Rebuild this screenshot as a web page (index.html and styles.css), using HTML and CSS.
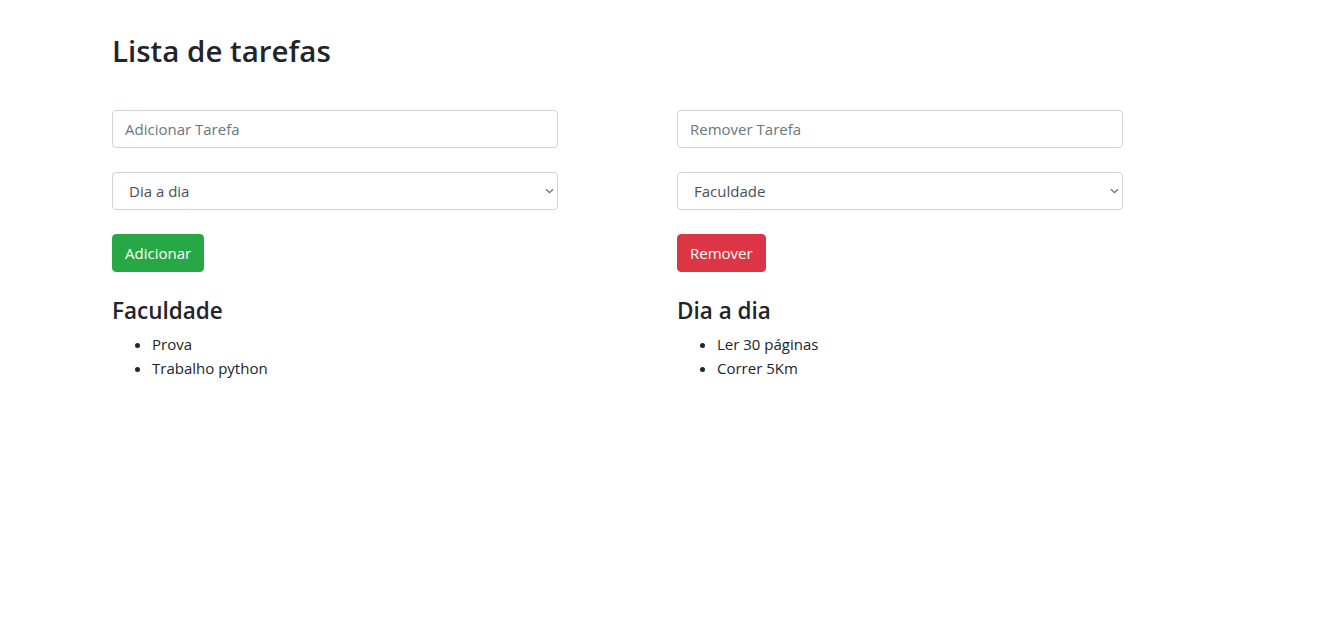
FILE: index.html
```html
<!DOCTYPE html>
<html lang="pt">
<head>
<meta charset="utf-8">
<title>Lista de tarefas</title>
<link rel="stylesheet" href="styles.css">
</head>
<body>
<main class="container">
  <h1 class="title">Lista de tarefas</h1>
  <div class="columns">
    <section class="col">
      <input class="field" type="text" placeholder="Adicionar Tarefa">
      <div class="select-wrap">
        <select class="field select">
          <option>Dia a dia</option>
          <option>Faculdade</option>
        </select>
        <svg class="chevron" width="9" height="6" viewBox="0 0 9 6"><path d="M1 1.2 L4.5 4.6 L8 1.2" fill="none" stroke="#6d6d6d" stroke-width="1.3"/></svg>
      </div>
      <button class="btn btn-success">Adicionar</button>
      <div class="list-block">
        <h4 class="list-title">Faculdade</h4>
        <ul class="tasks">
          <li>Prova</li>
          <li>Trabalho python</li>
        </ul>
      </div>
    </section>
    <section class="col">
      <input class="field" type="text" placeholder="Remover Tarefa">
      <div class="select-wrap">
        <select class="field select">
          <option>Faculdade</option>
          <option>Dia a dia</option>
        </select>
        <svg class="chevron" width="9" height="6" viewBox="0 0 9 6"><path d="M1 1.2 L4.5 4.6 L8 1.2" fill="none" stroke="#6d6d6d" stroke-width="1.3"/></svg>
      </div>
      <button class="btn btn-danger">Remover</button>
      <div class="list-block">
        <h4 class="list-title">Dia a dia</h4>
        <ul class="tasks">
          <li>Ler 30 páginas</li>
          <li>Correr 5Km</li>
        </ul>
      </div>
    </section>
  </div>
</main>
</body>
</html>
```

FILE: styles.css
```css
* { box-sizing: border-box; }
html, body { margin: 0; background: #fff; }
body {
  font-family: "Open Sans", "Noto Sans", sans-serif;
  font-size: 16px;
  line-height: 24px;
  color: #212529;
}
.container {
  padding: 29px 0 0 112px;
}
.title {
  margin: 0 0 37px 0;
  font-size: 29.5px;
  font-weight: 600;
  line-height: 44px;
}
.columns {
  display: grid;
  grid-template-columns: 565px 565px;
}
.col {
  display: flex;
  flex-direction: column;
  align-items: flex-start;
}
.field {
  width: 446px;
  height: 38px;
  padding: 6px 12px;
  font-family: inherit;
  font-size: 15px;
  color: #495057;
  background: #fff;
  border: 1px solid #ced4da;
  border-radius: 4px;
  margin-bottom: 24px;
}
.field::placeholder { color: #6c757d; }
.select-wrap {
  position: relative;
  width: 446px;
}
.select {
  -webkit-appearance: none;
  appearance: none;
  padding-left: 16px;
  display: block;
}
.chevron {
  position: absolute;
  right: 4px;
  top: 16px;
  pointer-events: none;
}
.btn {
  height: 38px;
  padding: 6px 12px;
  font-family: inherit;
  font-size: 15px;
  color: #fff;
  border: 1px solid transparent;
  border-radius: 4px;
  cursor: pointer;
}
.btn-success { background: #28a745; border-color: #28a745; }
.btn-danger { background: #dc3545; border-color: #dc3545; }
.list-block { margin-top: 25px; }
.list-title {
  margin: 0 0 7px 0;
  font-size: 22.5px;
  font-weight: 600;
  line-height: 28px;
}
.tasks {
  margin: 0;
  padding-left: 40px;
  font-size: 15px;
}
```
